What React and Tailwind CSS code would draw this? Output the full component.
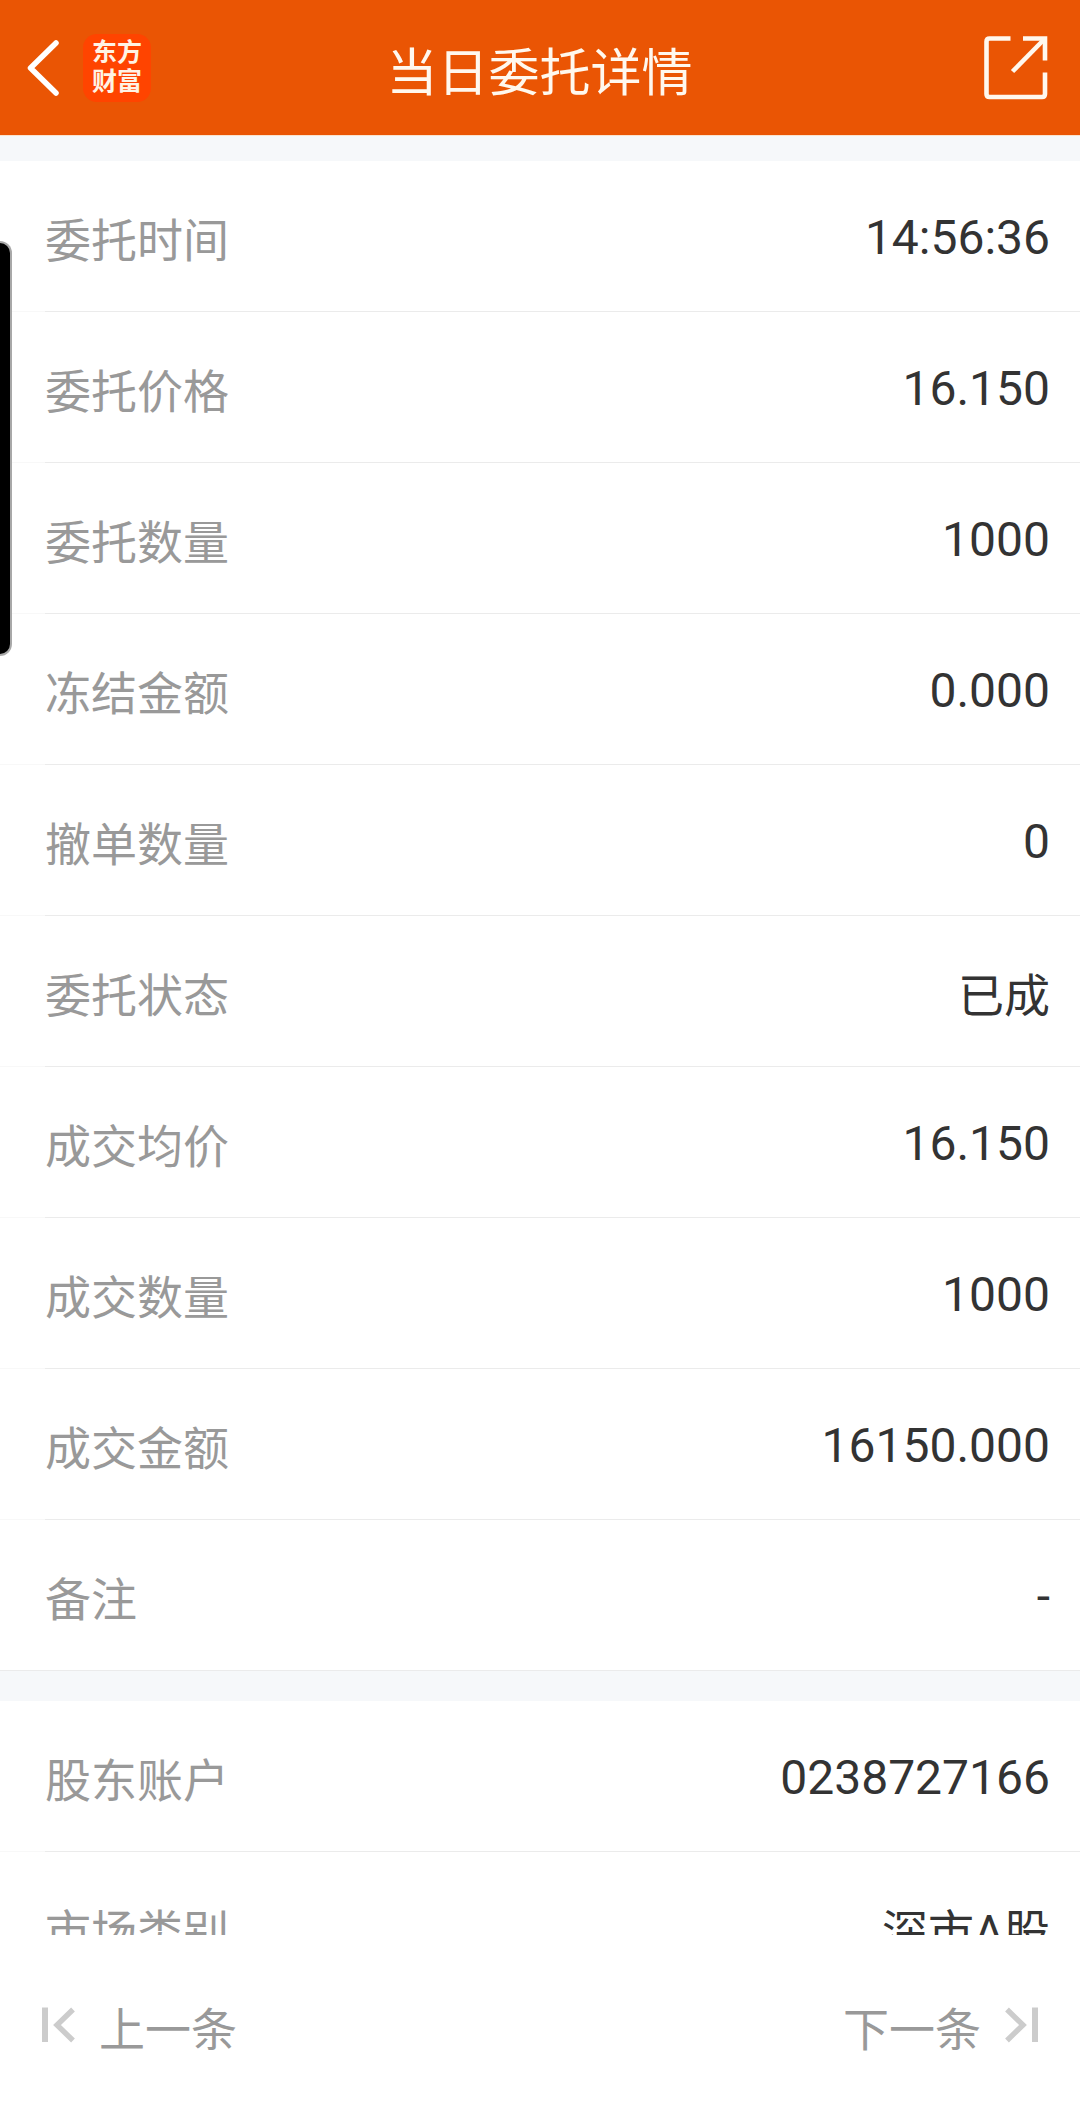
import React from "react";

const orderRows = [
  { label: "委托时间", value: "14:56:36" },
  { label: "委托价格", value: "16.150" },
  { label: "委托数量", value: "1000" },
  { label: "冻结金额", value: "0.000" },
  { label: "撤单数量", value: "0" },
  { label: "委托状态", value: "已成", cjk: true },
  { label: "成交均价", value: "16.150" },
  { label: "成交数量", value: "1000" },
  { label: "成交金额", value: "16150.000" },
  { label: "备注", value: "-" },
];

const accountRows = [
  { label: "股东账户", value: "0238727166" },
  { label: "市场类别", value: "深市A股", cjk: true },
];

const Row = ({ label, value, cjk, last }) => {
  return (
    <div className="h-[151px] shrink-0 flex flex-col">
      <div className="h-[150px] flex items-center justify-between pl-[45px] pr-[30px]">
        <span className="text-[46px] leading-[60px] pt-[9px] text-[#999999]">{label}</span>
        {cjk ? (
          <span className="text-[46px] leading-[60px] pt-[9px] text-[#333333]">{value}</span>
        ) : (
          <span className="text-[48px] leading-[60px] pt-[4px] text-[#333333]">{value}</span>
        )}
      </div>
      {/* Divider, paler under the left inset */}
      <div className="flex h-px">
        <div className={last ? "w-[45px] bg-[#ebebeb]" : "w-[45px] bg-[#f8f8f8]"} />
        <div className="flex-1 bg-[#ebebeb]" />
      </div>
    </div>
  );
};

const Header = () => {
  return (
    <header className="h-[135px] shrink-0 bg-[#ea5504] flex items-center justify-between pl-[26px] pr-[32px]">
      <div className="flex items-center w-[165px]">
        <svg width="34" height="56" viewBox="0 0 34 56" fill="none">
          <path d="M30 3 L4.5 28 L30 53" stroke="#ffffff" strokeWidth="5.5" strokeLinecap="round" strokeLinejoin="round" />
        </svg>
        <div className="ml-[23px] w-[68px] h-[68px] rounded-[14px] bg-[#ff4400] flex flex-col items-center justify-center pb-[2px] text-[#fff3e4] text-[25px] leading-[29px] font-bold">
          <span>东方</span>
          <span>财富</span>
        </div>
      </div>
      <h1 className="text-[51px] leading-[70px] pt-[13px] text-[#fff8ee]">当日委托详情</h1>
      <div className="w-[160px] flex justify-end">
        <svg width="64" height="64" viewBox="0 0 64 64" fill="none" stroke="#fff8ee" strokeWidth="4.6">
          <path d="M26.5 2.5 H5.5 Q2.5 2.5 2.5 5.5 V58 Q2.5 61 5.5 61 H58 Q61 61 61 58 V36.5" />
          <path d="M39 2.5 H61 V24.5" />
          <path d="M60 3.5 L28.5 35.5" />
        </svg>
      </div>
    </header>
  );
};

const Pager = () => {
  return (
    <footer className="h-[180px] shrink-0 bg-white flex justify-between pt-[60px] pl-[42px] pr-[42px] text-[46px] leading-[66px] text-[#999999]">
      <button className="flex items-start">
        <svg className="mt-[12px]" width="34" height="36" viewBox="0 0 34 36" fill="none" stroke="#cccccc">
          <path d="M3 0.5 V35" strokeWidth="6" />
          <path d="M31 2.5 L15 18 L31 33.5" strokeWidth="5.4" />
        </svg>
        <span className="ml-[23px] pt-[2px]">上一条</span>
      </button>
      <button className="flex items-start">
        <span className="mr-[23px] pt-[2px]">下一条</span>
        <svg className="mt-[12px]" width="34" height="36" viewBox="0 0 34 36" fill="none" stroke="#cccccc">
          <path d="M31 0.5 V35" strokeWidth="6" />
          <path d="M3 2.5 L19 18 L3 33.5" strokeWidth="5.4" />
        </svg>
      </button>
    </footer>
  );
};

const App = () => {
  return (
    <div className="relative w-[1080px] h-[2115px] overflow-hidden bg-white flex flex-col font-[Roboto,'Noto_Sans_CJK_SC',sans-serif]">
      <Header />
      <main className="h-[1800px] shrink-0 overflow-hidden flex flex-col">
        <div className="h-[26px] shrink-0 bg-[#f6f8fa] border-t border-[#fbe3cd]" />
        {orderRows.map((row, i) => (
          <Row key={row.label} {...row} last={i === orderRows.length - 1} />
        ))}
        <div className="h-[30px] shrink-0 bg-[#f6f8fa]" />
        {accountRows.map((row) => (
          <Row key={row.label} {...row} />
        ))}
      </main>
      <Pager />

      {/* Edge panel handle */}
      <div className="absolute left-0 top-[241px] w-[12px] h-[415px] rounded-r-[12px] bg-black border-2 border-l-0 border-[#a8a8a8]" />
    </div>
  );
};

export default App;
